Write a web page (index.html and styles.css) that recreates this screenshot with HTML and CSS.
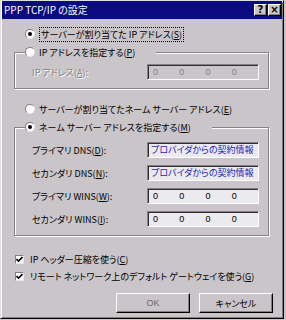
FILE: index.html
```html
<!DOCTYPE html>
<html lang="ja">
<head>
    <meta charset="UTF-8">
    <title>PPP TCP/IP の設定</title>
    <link rel="stylesheet" href="styles.css">
</head>
<body>
    <div class="window">
        <div class="titlebar">
            <span class="title">PPP TCP/IP の設定</span>
            <div class="title-buttons">
                <span class="tbtn">?</span>
                <span class="tbtn">×</span>
            </div>
        </div>

        <div class="content">
            <div class="option first">
                <span class="radio on"></span>
                <span class="focus">サーバーが割り当てた IP アドレス(<u>S</u>)</span>
            </div>

            <fieldset class="group g-ip">
                <legend>
                    <span class="option"><span class="radio"></span><span>IP アドレスを指定する(<u>P</u>)</span></span>
                </legend>
                <div class="field-row">
                    <span class="label disabled">IP アドレス(<u>A</u>):</span>
                    <div class="ip-field off">
                        <span>0</span><span>0</span><span>0</span><span>0</span>
                    </div>
                </div>
            </fieldset>

            <div class="option server">
                <span class="radio"></span>
                <span>サーバーが割り当てたネーム サーバー アドレス(<u>E</u>)</span>
            </div>

            <fieldset class="group g-dns">
                <legend>
                    <span class="option"><span class="radio on"></span><span>ネーム サーバー アドレスを指定する(<u>M</u>)</span></span>
                </legend>
                <div class="field-row">
                    <span class="label">プライマリ DNS(<u>D</u>):</span>
                    <div class="text-field">プロバイダからの契約情報</div>
                </div>
                <div class="field-row">
                    <span class="label">セカンダリ DNS(<u>N</u>):</span>
                    <div class="text-field">プロバイダからの契約情報</div>
                </div>
                <div class="field-row">
                    <span class="label">プライマリ WINS(<u>W</u>):</span>
                    <div class="ip-field">
                        <span>0</span><span>0</span><span>0</span><span>0</span>
                    </div>
                </div>
                <div class="field-row">
                    <span class="label">セカンダリ WINS(<u>I</u>):</span>
                    <div class="ip-field">
                        <span>0</span><span>0</span><span>0</span><span>0</span>
                    </div>
                </div>
            </fieldset>

            <div class="check first-check">
                <span class="box"><svg width="7" height="7" viewBox="0 0 7 7"><path d="M0.5 3 L2.5 5 L6.5 1" fill="none" stroke="#000" stroke-width="1.6"/></svg></span>
                <span>IP ヘッダー圧縮を使う(<u>C</u>)</span>
            </div>
            <div class="check">
                <span class="box"><svg width="7" height="7" viewBox="0 0 7 7"><path d="M0.5 3 L2.5 5 L6.5 1" fill="none" stroke="#000" stroke-width="1.6"/></svg></span>
                <span>リモート ネットワーク上のデフォルト ゲートウェイを使う(<u>G</u>)</span>
            </div>

            <div class="buttons">
                <button class="btn ok">OK</button>
                <button class="btn">キャンセル</button>
            </div>
        </div>
    </div>
</body>
</html>
```

FILE: styles.css
```css
body {
    margin: 0;
    background-color: #c9c5c9;
    font-family: "Noto Sans CJK JP", "Noto Sans", sans-serif;
    font-size: 9px;
    font-feature-settings: "palt";
    color: #000;
}
u {
    text-decoration: underline;
    text-underline-offset: 1px;
}
.window {
    width: 284px;
    height: 319px;
    box-sizing: border-box;
    background: #c9c5c9;
    border: 1px solid;
    border-color: #e0dde0 #000 #000 #e0dde0;
    box-shadow: inset 1px 1px 0 #fff, inset -1px -1px 0 #838083;
    padding: 0 1px;
}
.titlebar {
    height: 18px;
    background: #0a0a82;
    color: #fff;
    display: flex;
    align-items: center;
    justify-content: space-between;
    padding: 0 1px 0 2px;
}
.title {
    font-size: 10px;
    line-height: 18px;
}
.title-buttons {
    display: flex;
    gap: 1px;
}
.tbtn {
    width: 13px;
    height: 12px;
    box-sizing: border-box;
    background: #c9c5c9;
    color: #000;
    border: 1px solid;
    border-color: #fff #000 #000 #fff;
    box-shadow: inset -1px -1px 0 #838083;
    font-family: "DejaVu Sans", sans-serif;
    font-weight: bold;
    font-size: 10px;
    line-height: 10px;
    text-align: center;
}
.content {
    display: flex;
    flex-direction: column;
}
.option {
    display: flex;
    align-items: center;
    height: 14px;
    gap: 4px;
    white-space: nowrap;
}
.option.first {
    margin: 8px 0 0 23px;
}
.option.server {
    margin: 13px 0 0 23px;
}
.focus {
    border: 1px dotted #000;
    padding: 0 1px;
    line-height: 13px;
}
.radio {
    width: 10px;
    height: 10px;
    box-sizing: border-box;
    border-radius: 50%;
    background: #fff;
    border: 1px solid;
    border-color: #838083 #e8e6e8 #e8e6e8 #838083;
    display: flex;
    align-items: center;
    justify-content: center;
    flex-shrink: 0;
}
.radio.on::after {
    content: "";
    width: 4px;
    height: 4px;
    border-radius: 50%;
    background: #000;
}
.group {
    margin: 4px 0 0 12px;
    width: 255px;
    box-sizing: border-box;
    padding: 0 9px 8px 0;
    border: 1px solid #868286;
    box-shadow: 1px 1px 0 #fff, inset 1px 1px 0 #fff;
    min-width: 0;
}
.group legend {
    margin-left: 10px;
    padding: 0 21px 0 0;
    background: #c9c5c9;
    height: 14px;
}
.g-ip .field-row {
    margin-top: 5px;
}
.g-dns .field-row {
    margin-top: 7px;
}
.g-dns .field-row:first-of-type {
    margin-top: 8px;
}
.field-row {
    display: flex;
    align-items: center;
    justify-content: space-between;
    padding-left: 17px;
    height: 16px;
}
.label {
    white-space: nowrap;
}
.disabled {
    color: #868286;
    text-shadow: 1px 1px 0 #fff;
}
.text-field, .ip-field {
    width: 112px;
    height: 16px;
    box-sizing: border-box;
    border: 1px solid;
    border-color: #838083 #fff #fff #838083;
    box-shadow: inset 1px 1px 0 #303030;
    background: #ebeaee;
}
.text-field {
    color: #1c22b4;
    padding-left: 3px;
    line-height: 14px;
    white-space: nowrap;
    overflow: hidden;
}
.ip-field {
    display: grid;
    grid-template-columns: repeat(4, 1fr);
    padding-left: 5px;
    line-height: 14px;
    font-family: "Liberation Sans", sans-serif;
}
.ip-field.off {
    background: #c9c5c9;
    color: #868286;
}
.check {
    display: flex;
    align-items: center;
    gap: 6px;
    height: 14px;
    margin: 3px 0 0 13px;
    white-space: nowrap;
}
.check.first-check {
    margin-top: 16px;
}
.box {
    width: 9px;
    height: 9px;
    box-sizing: border-box;
    background: #fff;
    border: 1px solid;
    border-color: #838083 #e8e6e8 #e8e6e8 #838083;
    display: flex;
    align-items: center;
    justify-content: center;
}
.buttons {
    display: flex;
    justify-content: flex-end;
    gap: 9px;
    margin-top: 10px;
    padding-right: 9px;
}
.btn {
    width: 74px;
    height: 20px;
    box-sizing: border-box;
    background: #c9c5c9;
    border: 1px solid;
    border-color: #fff #000 #000 #fff;
    box-shadow: inset -1px -1px 0 #838083;
    font-family: "Noto Sans CJK JP", "Noto Sans", sans-serif;
    font-size: 9px;
    font-feature-settings: "palt";
    padding: 0;
    color: #000;
}
.btn.ok {
    color: #6e6b6e;
    font-family: "Liberation Sans", sans-serif;
}
```
